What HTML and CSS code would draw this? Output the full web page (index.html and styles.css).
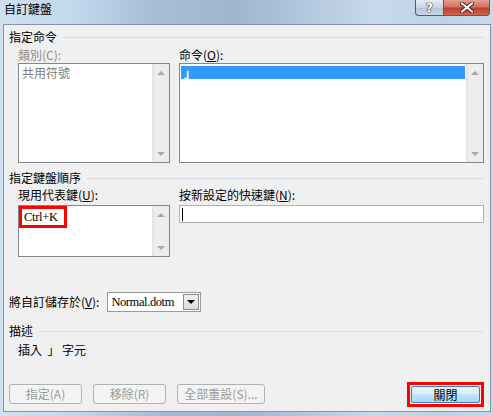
FILE: index.html
```html
<!DOCTYPE html>
<html lang="zh-Hant">
<head>
<meta charset="utf-8">
<title>自訂鍵盤</title>
<link rel="stylesheet" href="styles.css">
</head>
<body>
<div class="window">
  <div class="titlebar">
    <span class="title">自訂鍵盤</span>
    <div class="caption">
      <div class="cap-btn help">?</div>
      <div class="cap-btn close">
        <svg width="14" height="11" viewBox="0 0 14 11"><path d="M2 1.5 L12 9.5 M12 1.5 L2 9.5" stroke="#4a1a14" stroke-width="4" stroke-linecap="square"/><path d="M2 1.5 L12 9.5 M12 1.5 L2 9.5" stroke="#fff" stroke-width="2" stroke-linecap="square"/></svg>
      </div>
    </div>
  </div>
  <div class="client">
    <div class="group-title"><span>指定命令</span><i class="rule"></i></div>
    <div class="pair pair-cmd">
      <div class="col col-left">
        <div class="label disabled">類別(C):</div>
        <div class="listbox lb-tall">
          <div class="items"><div class="item grey">共用符號</div></div>
          <div class="vscroll"><i class="up"></i><i class="down"></i></div>
        </div>
      </div>
      <div class="col col-right">
        <div class="label">命令(<u>O</u>):</div>
        <div class="listbox lb-tall">
          <div class="items items-sel"><div class="item selected">」</div></div>
          <div class="vscroll"><i class="up"></i><i class="down"></i></div>
        </div>
      </div>
    </div>

    <div class="group-title gt2"><span>指定鍵盤順序</span><i class="rule"></i></div>
    <div class="pair pair-keys">
      <div class="col col-left">
        <div class="label">現用代表鍵(<u>U</u>):</div>
        <div class="listbox lb-short">
          <div class="items"><span class="key-item">Ctrl+K</span></div>
          <div class="vscroll"><i class="up"></i><i class="down"></i></div>
        </div>
      </div>
      <div class="col col-right">
        <div class="label">按新設定的快速鍵(<u>N</u>):</div>
        <div class="textbox"><i class="caret"></i></div>
      </div>
    </div>

    <div class="save-row">
      <span>將自訂儲存於(<u>V</u>):</span>
      <div class="combo">
        <span class="combo-text">Normal.dotm</span>
        <span class="combo-btn"><i></i></span>
      </div>
    </div>

    <div class="group-title gt3"><span>描述</span><i class="rule"></i></div>
    <div class="desc">插入&nbsp;&nbsp;」 字元</div>

    <div class="buttons">
      <button class="btn" disabled>指定(A)</button>
      <button class="btn" disabled>移除(R)</button>
      <button class="btn wide" disabled>全部重設(S)...</button>
      <span class="spacer"></span>
      <span class="focus-ring"><button class="btn primary">關閉</button></span>
    </div>
  </div>
</div>
</body>
</html>
```
FILE: styles.css
```css
* { box-sizing: border-box; }
html, body { margin: 0; padding: 0; }
body {
  width: 493px;
  height: 416px;
  overflow: hidden;
  font: 12px/14px "Noto Sans CJK TC", "Noto Sans CJK SC", sans-serif;
  color: #000;
}
.window {
  width: 493px;
  height: 416px;
  display: flex;
  flex-direction: column;
  padding: 0 2px 4px 3px;
  background: linear-gradient(90deg, #cfe0f2 0%, #c3d7ed 15%, #a7bdd5 32%, #9fb6cf 48%, #b2c7de 62%, #c8d9ec 76%, #bed2e8 90%, #c6d9ee 100%);
}
.titlebar {
  height: 24px;
  display: flex;
  justify-content: space-between;
  align-items: flex-start;
  flex: none;
}
.title { margin: 2px 0 0 1px; }
.caption { display: flex; margin-right: 1px; }
.cap-btn {
  height: 16px;
  display: flex;
  align-items: center;
  justify-content: center;
  border: 1px solid #4f5e72;
  border-top: none;
}
.help {
  width: 28px;
  border-right: none;
  border-bottom-left-radius: 4px;
  background: linear-gradient(#e6edf5, #c7d4e3 50%, #b4c4d6 51%, #c9d7e6);
  font: bold 12px/14px "DejaVu Sans", sans-serif;
  color: #fff;
  text-shadow: 0 0 1px #333, 0 0 1px #333, 0 0 1px #333;
}
.close {
  width: 47px;
  border-bottom-right-radius: 4px;
  background: linear-gradient(#e4a192, #d0725f 45%, #c0412c 55%, #d2634d);
}
.client {
  flex: 1;
  display: flex;
  flex-direction: column;
  background: #f0f0f0;
  border: 1px solid #8293a7;
  padding: 5px 6px 5px 5px;
}
.group-title {
  display: flex;
  align-items: center;
  gap: 6px;
  height: 14px;
}
.rule { flex: 1; height: 1px; background: #d5dfe5; margin-top: 1px; }
.gt2 { margin-top: 8px; }
.gt3 { margin-top: 12px; }
.pair { display: flex; gap: 9px; padding-left: 9px; }
.pair-cmd { margin-top: 4px; }
.pair-keys { margin-top: 3px; }
.col { display: flex; flex-direction: column; }
.col-left { width: 152px; }
.col-right { flex: 1; }
.label { height: 14px; margin-bottom: 1px; }
.pair-keys .label { margin-bottom: 3px; }
.disabled { color: #8d8d8d; }
u { text-decoration: underline; text-underline-offset: 1px; }
.listbox {
  display: flex;
  background: #fff;
  border: 1px solid #82878f;
}
.lb-tall { height: 100px; }
.lb-short { height: 52px; }
.items { flex: 1; padding: 2px 1px 0 3px; }
.items-sel { padding-left: 1px; }
.item { height: 13px; line-height: 13px; }
.grey { color: #7a7a7a; }
.selected { background: #3399ff; color: #fff; padding-left: 3px; font-weight: bold; }
.key-item {
  display: inline-block;
  margin-top: 1px;
  width: 42px;
  height: 16px;
  line-height: 16px;
  padding-left: 2px;
  font: 12.5px/16px "Liberation Serif", serif;
  letter-spacing: -0.3px;
  outline: 3px solid #ff0000;
}
.vscroll {
  width: 17px;
  display: flex;
  flex-direction: column;
  justify-content: space-between;
  background: linear-gradient(90deg, #e3e3e3, #eeeeee 20%, #ececec);
}
.vscroll i { height: 17px; display: flex; align-items: center; justify-content: center; }
.vscroll i::after {
  content: "";
  width: 0; height: 0;
  border-left: 4px solid transparent;
  border-right: 4px solid transparent;
}
.vscroll .up::after { border-bottom: 4px solid #a9a9a9; }
.vscroll .down::after { border-top: 4px solid #a9a9a9; }
.textbox {
  height: 18px;
  background: #fff;
  border: 1px solid #b0b0b0;
  padding: 2px 0 0 2px;
}
.caret { display: block; width: 1px; height: 13px; background: #000; }
.save-row {
  margin-top: 35px;
  display: flex;
  align-items: center;
  gap: 8px;
  height: 20px;
}
.combo {
  width: 94px;
  height: 20px;
  display: flex;
  align-items: stretch;
  background: #fff;
  border: 1px solid #9a9a9a;
}
.combo-text {
  flex: 1;
  padding-left: 3px;
  font: 12.5px/18px "Liberation Serif", serif;
  letter-spacing: -0.4px;
}
.combo-btn {
  width: 16px;
  margin: 1px;
  display: flex;
  align-items: center;
  justify-content: center;
  background: linear-gradient(#f2f2f2, #dcdcdc);
  border: 1px solid #8a8a8a;
}
.combo-btn i {
  width: 0; height: 0;
  border-left: 4px solid transparent;
  border-right: 4px solid transparent;
  border-top: 4px solid #000;
}
.desc { margin-top: 5px; padding-left: 9px; }
.buttons {
  margin-top: auto;
  display: flex;
  align-items: center;
  gap: 11px;
  padding-right: 0;
}
.spacer { flex: 1; }
.btn {
  width: 73px;
  height: 20px;
  padding: 0;
  font: 12px/14px "Noto Sans CJK TC", sans-serif;
  border: 1px solid #adb2b5;
  border-radius: 3px;
  background: #f4f4f4;
  color: #9a9a9a;
}
.btn.wide { width: 88px; }
.focus-ring {
  display: flex;
  border: 3px solid #ff0000;
  padding: 1px;
  margin-bottom: -1px;
}
.btn.primary {
  width: 69px;
  height: 17px;
  color: #000;
  border: 1px solid #3c7fb1;
  border-radius: 2px;
  background: linear-gradient(#eaf6fd, #d9f0fc 45%, #bee6fd 50%, #a7d9f5);
}
```
